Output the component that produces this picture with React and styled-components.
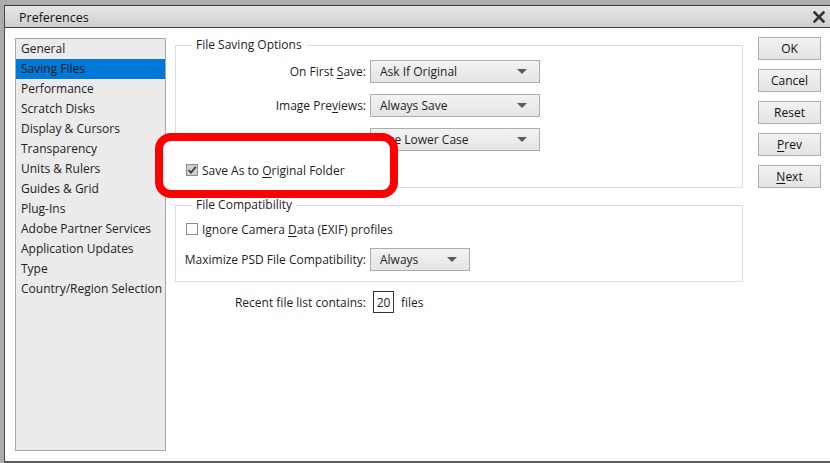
import React from "react"
import styled, { createGlobalStyle } from "styled-components"

const Global = createGlobalStyle`
  html, body {
    margin: 0;
    padding: 0;
    background: #acacac;
  }
  body {
    font-family: "Open Sans", "Noto Sans", sans-serif;
    font-size: 12px;
    color: #1e1e1e;
  }
`

const categories = [
  "General",
  "Saving Files",
  "Performance",
  "Scratch Disks",
  "Display & Cursors",
  "Transparency",
  "Units & Rulers",
  "Guides & Grid",
  "Plug-Ins",
  "Adobe Partner Services",
  "Application Updates",
  "Type",
  "Country/Region Selection",
]

const Window = styled.div`
  margin: 5px 0 0 4px;
  width: 826px;
  height: 455px;
  background: #fff;
  border-left: 1px solid #4a4a4a;
  border-top: 1px solid #3a3a3a;
  border-bottom: 2px solid #5a5a5a;
  display: flex;
  flex-direction: column;
`

const TitleBar = styled.div`
  height: 20px;
  flex: none;
  display: flex;
  align-items: center;
  justify-content: space-between;
  padding: 1px 6px 0 14px;
  background: linear-gradient(#e6e6e6, #cfcfcf);
  border-bottom: 1px solid #3c3c3c;
  font-size: 12.5px;
  color: #111;
`

const Body = styled.div`
  position: relative;
  flex: 1;
  display: flex;
  padding: 9px 10px 9px 10px;
`

const Sidebar = styled.div`
  width: 149px;
  height: 411px;
  margin-top: 1px;
  background: #ebebeb;
  border: 1px solid #a8a8a8;
  flex: none;
`

const Item = styled.div`
  height: 20px;
  line-height: 20px;
  padding-left: 5px;
  white-space: nowrap;
  background: ${p => (p.$active ? "#0078d7" : "transparent")};
  color: ${p => (p.$active ? "#1a1a1a" : "#222")};
`

const Main = styled.div`
  width: 568px;
  margin-left: 9px;
  flex: none;
`

const Group = styled.fieldset`
  margin: ${p => p.$top || 0}px 0 0 0;
  padding: ${p => p.$pt}px 10px ${p => p.$pb}px 10px;
  border: 1px solid #dcdcdc;
  display: flex;
  flex-direction: column;
  gap: 11px;
`

const Legend = styled.legend`
  margin-left: 6px;
  padding: 0 4px;
  line-height: 16px;
  color: #1e1e1e;
`

const Row = styled.div`
  display: grid;
  grid-template-columns: 180px auto;
  column-gap: 4px;
  align-items: center;
  justify-items: start;
  justify-content: start;
`

const Label = styled.span`
  justify-self: end;
  white-space: nowrap;
`

const Select = styled.div`
  width: ${p => p.$w}px;
  height: 23px;
  box-sizing: border-box;
  border: 1px solid #adadad;
  background: linear-gradient(#f3f3f3, #e4e4e4);
  display: flex;
  align-items: center;
  justify-content: space-between;
  padding: 0 12px 0 9px;
`

const Arrow = styled.span`
  width: 0;
  height: 0;
  border-left: 5px solid transparent;
  border-right: 5px solid transparent;
  border-top: 5px solid #5b5b5b;
`

const Check = styled.label`
  position: relative;
  z-index: ${p => (p.$raised ? 3 : "auto")};
  display: flex;
  align-items: center;
  gap: 4px;
  height: 16px;
`

const Box = styled.span`
  width: 10px;
  height: 10px;
  border: 1px solid #8c8c8c;
  background: ${p => (p.$checked ? "#cfcfcf" : "#fbfbfb")};
  display: flex;
  align-items: center;
  justify-content: center;
`

const NumberBox = styled.span`
  width: 19px;
  height: 20px;
  border: 1px solid #333;
  display: flex;
  align-items: center;
  justify-content: center;
  margin-left: 7px;
  margin-right: 7px;
`

const Recent = styled(Row)`
  margin-top: 9px;
  grid-template-columns: 191px auto auto;
  column-gap: 0;
`

const Buttons = styled.div`
  margin-left: 15px;
  display: flex;
  flex-direction: column;
  gap: 9px;
`

const Button = styled.div`
  width: 61px;
  height: 21px;
  border: 1px solid #adadad;
  background: linear-gradient(#f2f2f2, #e3e3e3);
  display: flex;
  align-items: center;
  justify-content: center;
  color: #111;
`

const Highlight = styled.div`
  position: absolute;
  z-index: 2;
  left: 150px;
  top: 105px;
  width: 227px;
  height: 49px;
  border: 8px solid #fe0000;
  border-radius: 16px;
  background: #fff;
`

const U = styled.span`
  text-decoration: underline;
  text-underline-offset: 2px;
`

const CloseIcon = () => (
  <svg width="12" height="12" viewBox="0 0 12 12">
    <path d="M1.5 1.5 L10.5 10.5 M10.5 1.5 L1.5 10.5" stroke="#333" strokeWidth="2.6" strokeLinecap="square" />
  </svg>
)

const Tick = () => (
  <svg width="10" height="10" viewBox="0 0 10 10">
    <path d="M1.5 5 L4 7.6 L8.8 1.8" fill="none" stroke="#3c3c3c" strokeWidth="1.8" />
  </svg>
)

export default function App () {
  return (
    <>
      <Global />
      <Window>
        <TitleBar>
          <span>Preferences</span>
          <CloseIcon />
        </TitleBar>
        <Body>
          <Sidebar>
            {categories.map(c => (
              <Item key={c} $active={c === "Saving Files"}>{c}</Item>
            ))}
          </Sidebar>

          <Main>
            <Group $pt={7} $pb={9}>
              <Legend>File Saving Options</Legend>
              <Row>
                <Label>On First <U>S</U>ave:</Label>
                <Select $w={170}>Ask If Original<Arrow /></Select>
              </Row>
              <Row>
                <Label>Image Pre<U>v</U>iews:</Label>
                <Select $w={170}>Always Save<Arrow /></Select>
              </Row>
              <Row>
                <Label></Label>
                <Select $w={170}>Use Lower Case<Arrow /></Select>
              </Row>
              <Check $raised>
                <Box $checked><Tick /></Box>
                <span>Save As to <U>O</U>riginal Folder</span>
              </Check>
            </Group>

            <Group $top={9} $pt={8} $pb={10}>
              <Legend>File Compatibility</Legend>
              <Check>
                <Box />
                <span>Ignore Camera <U>D</U>ata (EXIF) profiles</span>
              </Check>
              <Row>
                <Label>Maximize PSD File Compatibility:</Label>
                <Select $w={100}>Always<Arrow /></Select>
              </Row>
            </Group>

            <Recent>
              <Label>Recent file list contains:</Label>
              <NumberBox>20</NumberBox>
              <span>files</span>
            </Recent>
          </Main>

          <Buttons>
            <Button>OK</Button>
            <Button>Cancel</Button>
            <Button>Reset</Button>
            <Button><U>P</U>rev</Button>
            <Button><U>N</U>ext</Button>
          </Buttons>

          <Highlight />
        </Body>
      </Window>
    </>
  )
}
